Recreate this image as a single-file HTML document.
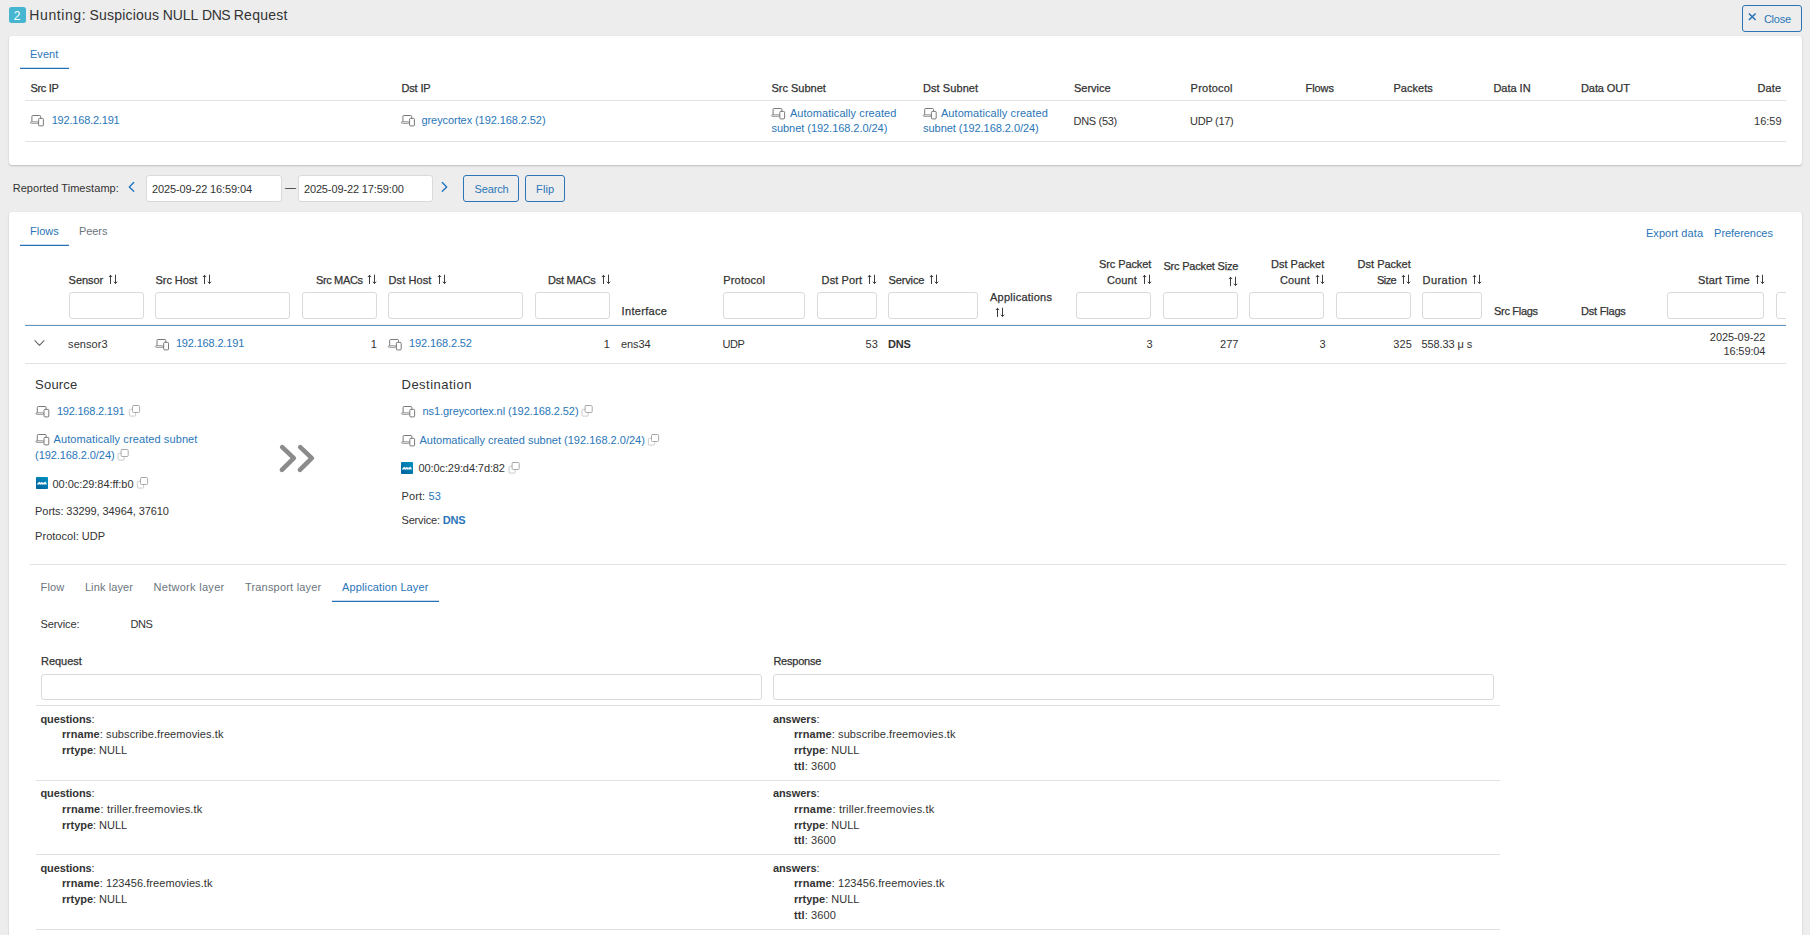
<!DOCTYPE html>
<html lang="en">
<head>
<meta charset="utf-8">
<title>Hunting: Suspicious NULL DNS Request</title>
<style>
html,body{margin:0;padding:0}
body{width:1810px;height:935px;overflow:hidden;position:relative;background:#ededed;
 font-family:"Liberation Sans",Arial,sans-serif;font-size:11px;color:#333}
h1{margin:0;font:inherit}
.t{position:absolute;white-space:nowrap;line-height:14px;font-size:11px;color:#333}
.t b{font-weight:700}
.w{display:inline-block}
.s12{font-size:12px}.s13{font-size:13px;line-height:16px}.s14{font-size:14px;line-height:16px}
.sb{-webkit-text-stroke:0.25px currentColor}
.bx,.ln,.in,.card,.ic,.clip{position:absolute}
.card{background:#fff;border-radius:3px;box-shadow:0 1px 2px rgba(0,0,0,.2),0 0 1px rgba(0,0,0,.07)}
.in{box-sizing:border-box;background:#fff;border:1px solid #dadada;border-radius:3px}
.clip{overflow:hidden}
.ic{overflow:visible}
</style>
</head>
<body>
<header id="titlebar">
<div class="bx" style="left:9px;top:7px;width:17px;height:16px;background:#46b6d0;border-radius:2.5px"></div>
<span class="t s12" style="left:13.70px;top:9.00px;color:#fff;letter-spacing:0.912px">2</span>
<h1>
<span class="t s14 ttl" style="left:29.35px;top:7.10px;word-spacing:-3.892px"><span class="w" style="width:60.15px;letter-spacing:0.587px">Hunting:</span> <span class="w" style="width:73.30px;letter-spacing:0.200px">Suspicious</span> <span class="w" style="width:39.30px;letter-spacing:-0.099px">NULL</span> <span class="w" style="width:31.70px;letter-spacing:-0.488px">DNS</span> <span class="w" style="width:54.90px;letter-spacing:0.249px">Request</span></span>
</h1>
<div class="bx" style="left:1742px;top:5px;width:60px;height:27px;border:1px solid #2b74b6;border-radius:3px;box-sizing:border-box"></div>
<svg class="ic" style="left:1747px;top:12px" width="12" height="12" viewBox="0 0 12 12" ><path d="M1.9 1.5L8.6 8.1M8.6 1.5L1.9 8.1" stroke="#2470b4" stroke-width="1.45" fill="none"/></svg>
<span class="t" style="left:1763.90px;top:12.00px;color:#2a76b8;letter-spacing:-0.225px">Close</span>
</header>
<section id="event-card">
<div class="card" style="left:9px;top:36px;width:1793px;height:129px;"></div>
<span class="t" style="left:29.90px;top:47.00px;color:#2a76b8;letter-spacing:0.092px">Event</span>
<div class="ln" style="left:20px;top:68px;width:49px;height:1px;background:#2470b4"></div>
<div class="ln" style="left:20px;top:67px;width:49px;height:1px;background:rgba(36,112,180,0.25)"></div>
<span class="t sb" style="left:30.40px;top:81.00px;letter-spacing:-0.292px">Src IP</span>
<span class="t sb" style="left:401.40px;top:81.00px;letter-spacing:-0.126px">Dst IP</span>
<span class="t sb" style="left:771.40px;top:81.00px">Src Subnet</span>
<span class="t sb" style="left:923.00px;top:81.00px;letter-spacing:0.078px">Dst Subnet</span>
<span class="t sb" style="left:1074.00px;top:81.00px;letter-spacing:-0.012px">Service</span>
<span class="t sb" style="left:1190.60px;top:81.00px;letter-spacing:0.230px">Protocol</span>
<span class="t sb" style="left:1305.60px;top:81.00px;letter-spacing:-0.107px">Flows</span>
<span class="t sb" style="left:1393.50px;top:81.00px;letter-spacing:0.023px">Packets</span>
<span class="t sb" style="left:1493.40px;top:81.00px;letter-spacing:-0.014px">Data IN</span>
<span class="t sb" style="left:1581.00px;top:81.00px;letter-spacing:-0.089px">Data OUT</span>
<span class="t sb" style="left:1757.40px;top:81.00px;letter-spacing:0.137px">Date</span>
<div class="ln" style="left:25px;top:100px;width:1761px;height:1px;background:#e2e2e2"></div>
<svg class="ic" style="left:29px;top:114px" width="16" height="14" viewBox="0 0 16 14" ><g transform="translate(0.9 0.9)"><g fill="none" stroke="#6a6a6a" stroke-width="0.9" stroke-linejoin="round"><path d="M2 6.8V1.6a1 1 0 0 1 1-1h6.8a1 1 0 0 1 1 1v1.5"/><rect x="0.6" y="6.85" width="7.6" height="1.6" rx="0.8" stroke-width="0.7"/><rect x="8.7" y="3.5" width="4.8" height="7.5" rx="0.9" fill="#fff"/></g></g></svg>
<a class="t" style="left:51.70px;top:113.00px;color:#2a76b8;letter-spacing:-0.197px">192.168.2.191</a>
<svg class="ic" style="left:400px;top:114px" width="16" height="14" viewBox="0 0 16 14" ><g transform="translate(0.9 0.9)"><g fill="none" stroke="#6a6a6a" stroke-width="0.9" stroke-linejoin="round"><path d="M2 6.8V1.6a1 1 0 0 1 1-1h6.8a1 1 0 0 1 1 1v1.5"/><rect x="0.6" y="6.85" width="7.6" height="1.6" rx="0.8" stroke-width="0.7"/><rect x="8.7" y="3.5" width="4.8" height="7.5" rx="0.9" fill="#fff"/></g></g></svg>
<a class="t" style="left:421.50px;top:113.00px;color:#2a76b8;letter-spacing:-0.079px">greycortex (192.168.2.52)</a>
<svg class="ic" style="left:771px;top:107px" width="16" height="14" viewBox="0 0 16 14" ><g transform="translate(0.1 0.9)"><g fill="none" stroke="#6a6a6a" stroke-width="0.9" stroke-linejoin="round"><path d="M2 6.8V1.6a1 1 0 0 1 1-1h6.8a1 1 0 0 1 1 1v1.5"/><rect x="0.6" y="6.85" width="7.6" height="1.6" rx="0.8" stroke-width="0.7"/><rect x="8.7" y="3.5" width="4.8" height="7.5" rx="0.9" fill="#fff"/></g></g></svg>
<a class="t" style="left:789.90px;top:106.40px;color:#2a76b8;letter-spacing:0.068px">Automatically created</a>
<a class="t" style="left:771.50px;top:121.00px;color:#2a76b8;letter-spacing:-0.044px">subnet (192.168.2.0/24)</a>
<svg class="ic" style="left:922px;top:107px" width="16" height="14" viewBox="0 0 16 14" ><g transform="translate(0.7 0.9)"><g fill="none" stroke="#6a6a6a" stroke-width="0.9" stroke-linejoin="round"><path d="M2 6.8V1.6a1 1 0 0 1 1-1h6.8a1 1 0 0 1 1 1v1.5"/><rect x="0.6" y="6.85" width="7.6" height="1.6" rx="0.8" stroke-width="0.7"/><rect x="8.7" y="3.5" width="4.8" height="7.5" rx="0.9" fill="#fff"/></g></g></svg>
<a class="t" style="left:940.90px;top:106.40px;color:#2a76b8;letter-spacing:0.087px">Automatically created</a>
<a class="t" style="left:923.10px;top:121.00px;color:#2a76b8;letter-spacing:-0.053px">subnet (192.168.2.0/24)</a>
<span class="t" style="left:1073.50px;top:114.00px;letter-spacing:-0.305px">DNS (53)</span>
<span class="t" style="left:1190.10px;top:114.00px;letter-spacing:-0.282px">UDP (17)</span>
<span class="t" style="left:1754.10px;top:114.00px;letter-spacing:-0.026px">16:59</span>
<div class="ln" style="left:25px;top:141px;width:1761px;height:1px;background:#e2e2e2"></div>
</section>
<section id="timebar">
<span class="t" style="left:12.70px;top:181.00px;letter-spacing:0.055px">Reported Timestamp:</span>
<svg class="ic" style="left:126px;top:180px" width="13" height="15" viewBox="0 0 13 15" ><path d="M7.7 2.5L3.3 6.9L7.7 11.3" stroke="#1f74bf" stroke-width="1.35" fill="none" stroke-linecap="round" stroke-linejoin="round"/></svg>
<div class="in" style="left:146px;top:175px;width:136px;height:27px;"></div>
<span class="t" style="left:152.10px;top:182.00px;letter-spacing:-0.124px">2025-09-22 16:59:04</span>
<span class="t" style="left:285.00px;top:180.00px;letter-spacing:-0.600px">—</span>
<div class="in" style="left:298px;top:175px;width:135px;height:27px;"></div>
<span class="t" style="left:303.90px;top:182.00px;letter-spacing:-0.124px">2025-09-22 17:59:00</span>
<svg class="ic" style="left:438px;top:180px" width="13" height="15" viewBox="0 0 13 15" ><path d="M4.3 2.5L8.7 6.9L4.3 11.3" stroke="#1f74bf" stroke-width="1.35" fill="none" stroke-linecap="round" stroke-linejoin="round"/></svg>
<div class="bx" style="left:463px;top:175px;width:56px;height:27px;border:1px solid #2b74b6;border-radius:3px;box-sizing:border-box"></div>
<span class="t" style="left:474.50px;top:182.00px;color:#2a76b8;letter-spacing:-0.143px">Search</span>
<div class="bx" style="left:525px;top:175px;width:40px;height:27px;border:1px solid #2b74b6;border-radius:3px;box-sizing:border-box"></div>
<span class="t" style="left:536.10px;top:182.00px;color:#2a76b8;letter-spacing:0.066px">Flip</span>
</section>
<section id="flows-card">
<div class="card" style="left:9px;top:212px;width:1793px;height:723px;border-radius:3px 3px 0 0"></div>
<span class="t" style="left:29.90px;top:224.00px;color:#2a76b8;letter-spacing:0.053px">Flows</span>
<div class="ln" style="left:20px;top:245px;width:49px;height:1px;background:#2470b4"></div>
<div class="ln" style="left:20px;top:244px;width:49px;height:1px;background:rgba(36,112,180,0.25)"></div>
<span class="t" style="left:78.90px;top:224.00px;color:#6c757d;letter-spacing:-0.030px">Peers</span>
<a class="t" style="left:1645.90px;top:226.00px;color:#2a76b8;letter-spacing:0.085px">Export data</a>
<a class="t" style="left:1714.10px;top:226.00px;color:#2a76b8;letter-spacing:-0.047px">Preferences</a>
<span class="t sb" style="left:68.60px;top:273.00px;letter-spacing:-0.043px">Sensor</span>
<svg class="ic" style="left:108px;top:274px" width="11" height="11" viewBox="0 0 11 11" ><g transform="translate(0.5 0.3)"><g fill="none" stroke="#3d3d3d" stroke-width="1" stroke-linecap="round" stroke-linejoin="round"><path d="M2 9.3V1M0.6 2.5L2 1L3.4 2.5"/><path d="M7 0.8V9.1M5.6 7.7L7 9.2L8.4 7.7"/></g></g></svg>
<span class="t sb" style="left:155.60px;top:273.00px;letter-spacing:-0.073px">Src Host</span>
<svg class="ic" style="left:202px;top:274px" width="11" height="11" viewBox="0 0 11 11" ><g transform="translate(0.5 0.3)"><g fill="none" stroke="#3d3d3d" stroke-width="1" stroke-linecap="round" stroke-linejoin="round"><path d="M2 9.3V1M0.6 2.5L2 1L3.4 2.5"/><path d="M7 0.8V9.1M5.6 7.7L7 9.2L8.4 7.7"/></g></g></svg>
<span class="t sb" style="left:316.00px;top:273.00px;letter-spacing:-0.363px">Src MACs</span>
<svg class="ic" style="left:367px;top:274px" width="11" height="11" viewBox="0 0 11 11" ><g transform="translate(0.5 0.3)"><g fill="none" stroke="#3d3d3d" stroke-width="1" stroke-linecap="round" stroke-linejoin="round"><path d="M2 9.3V1M0.6 2.5L2 1L3.4 2.5"/><path d="M7 0.8V9.1M5.6 7.7L7 9.2L8.4 7.7"/></g></g></svg>
<span class="t sb" style="left:388.60px;top:273.00px;letter-spacing:0.077px">Dst Host</span>
<svg class="ic" style="left:437px;top:274px" width="11" height="11" viewBox="0 0 11 11" ><g transform="translate(0.5 0.3)"><g fill="none" stroke="#3d3d3d" stroke-width="1" stroke-linecap="round" stroke-linejoin="round"><path d="M2 9.3V1M0.6 2.5L2 1L3.4 2.5"/><path d="M7 0.8V9.1M5.6 7.7L7 9.2L8.4 7.7"/></g></g></svg>
<span class="t sb" style="left:548.00px;top:273.00px;letter-spacing:-0.238px">Dst MACs</span>
<svg class="ic" style="left:601px;top:274px" width="11" height="11" viewBox="0 0 11 11" ><g transform="translate(0.5 0.3)"><g fill="none" stroke="#3d3d3d" stroke-width="1" stroke-linecap="round" stroke-linejoin="round"><path d="M2 9.3V1M0.6 2.5L2 1L3.4 2.5"/><path d="M7 0.8V9.1M5.6 7.7L7 9.2L8.4 7.7"/></g></g></svg>
<span class="t sb" style="left:621.60px;top:303.60px;letter-spacing:0.310px">Interface</span>
<span class="t sb" style="left:723.20px;top:273.00px;letter-spacing:0.205px">Protocol</span>
<span class="t sb" style="left:821.60px;top:273.00px;letter-spacing:0.108px">Dst Port</span>
<svg class="ic" style="left:867px;top:274px" width="11" height="11" viewBox="0 0 11 11" ><g transform="translate(0.5 0.3)"><g fill="none" stroke="#3d3d3d" stroke-width="1" stroke-linecap="round" stroke-linejoin="round"><path d="M2 9.3V1M0.6 2.5L2 1L3.4 2.5"/><path d="M7 0.8V9.1M5.6 7.7L7 9.2L8.4 7.7"/></g></g></svg>
<span class="t sb" style="left:888.60px;top:273.00px;letter-spacing:-0.155px">Service</span>
<svg class="ic" style="left:929px;top:274px" width="11" height="11" viewBox="0 0 11 11" ><g transform="translate(0.5 0.3)"><g fill="none" stroke="#3d3d3d" stroke-width="1" stroke-linecap="round" stroke-linejoin="round"><path d="M2 9.3V1M0.6 2.5L2 1L3.4 2.5"/><path d="M7 0.8V9.1M5.6 7.7L7 9.2L8.4 7.7"/></g></g></svg>
<span class="t sb" style="left:1099.00px;top:257.00px;letter-spacing:-0.099px">Src Packet</span>
<span class="t sb" style="left:1107.00px;top:273.00px;letter-spacing:0.088px">Count</span>
<svg class="ic" style="left:1142px;top:274px" width="11" height="11" viewBox="0 0 11 11" ><g transform="translate(0.5 0.3)"><g fill="none" stroke="#3d3d3d" stroke-width="1" stroke-linecap="round" stroke-linejoin="round"><path d="M2 9.3V1M0.6 2.5L2 1L3.4 2.5"/><path d="M7 0.8V9.1M5.6 7.7L7 9.2L8.4 7.7"/></g></g></svg>
<span class="t sb" style="left:1163.40px;top:259.00px;letter-spacing:-0.189px">Src Packet Size</span>
<span class="t sb" style="left:1271.00px;top:257.00px">Dst Packet</span>
<span class="t sb" style="left:1280.00px;top:273.00px;letter-spacing:0.088px">Count</span>
<svg class="ic" style="left:1315px;top:274px" width="11" height="11" viewBox="0 0 11 11" ><g transform="translate(0.5 0.3)"><g fill="none" stroke="#3d3d3d" stroke-width="1" stroke-linecap="round" stroke-linejoin="round"><path d="M2 9.3V1M0.6 2.5L2 1L3.4 2.5"/><path d="M7 0.8V9.1M5.6 7.7L7 9.2L8.4 7.7"/></g></g></svg>
<span class="t sb" style="left:1357.60px;top:257.00px">Dst Packet</span>
<span class="t sb" style="left:1377.00px;top:273.00px;letter-spacing:-0.552px">Size</span>
<svg class="ic" style="left:1401px;top:274px" width="11" height="11" viewBox="0 0 11 11" ><g transform="translate(0.5 0.3)"><g fill="none" stroke="#3d3d3d" stroke-width="1" stroke-linecap="round" stroke-linejoin="round"><path d="M2 9.3V1M0.6 2.5L2 1L3.4 2.5"/><path d="M7 0.8V9.1M5.6 7.7L7 9.2L8.4 7.7"/></g></g></svg>
<span class="t sb" style="left:1422.60px;top:273.00px;letter-spacing:0.428px">Duration</span>
<svg class="ic" style="left:1472px;top:274px" width="11" height="11" viewBox="0 0 11 11" ><g transform="translate(0.5 0.3)"><g fill="none" stroke="#3d3d3d" stroke-width="1" stroke-linecap="round" stroke-linejoin="round"><path d="M2 9.3V1M0.6 2.5L2 1L3.4 2.5"/><path d="M7 0.8V9.1M5.6 7.7L7 9.2L8.4 7.7"/></g></g></svg>
<span class="t sb" style="left:1494.00px;top:303.60px;letter-spacing:-0.297px">Src Flags</span>
<span class="t sb" style="left:1581.00px;top:303.60px;letter-spacing:-0.208px">Dst Flags</span>
<span class="t sb" style="left:1698.00px;top:273.00px;letter-spacing:0.167px">Start Time</span>
<svg class="ic" style="left:1755px;top:274px" width="11" height="11" viewBox="0 0 11 11" ><g transform="translate(0.5 0.3)"><g fill="none" stroke="#3d3d3d" stroke-width="1" stroke-linecap="round" stroke-linejoin="round"><path d="M2 9.3V1M0.6 2.5L2 1L3.4 2.5"/><path d="M7 0.8V9.1M5.6 7.7L7 9.2L8.4 7.7"/></g></g></svg>
<span class="t sb" style="left:990.00px;top:290.00px;letter-spacing:0.239px">Applications</span>
<svg class="ic" style="left:995px;top:307px" width="11" height="11" viewBox="0 0 11 11" ><g transform="translate(0.5 0.3)"><g fill="none" stroke="#3d3d3d" stroke-width="1" stroke-linecap="round" stroke-linejoin="round"><path d="M2 9.3V1M0.6 2.5L2 1L3.4 2.5"/><path d="M7 0.8V9.1M5.6 7.7L7 9.2L8.4 7.7"/></g></g></svg>
<svg class="ic" style="left:1228px;top:276px" width="11" height="11" viewBox="0 0 11 11" ><g transform="translate(0.5 0.3)"><g fill="none" stroke="#3d3d3d" stroke-width="1" stroke-linecap="round" stroke-linejoin="round"><path d="M2 9.3V1M0.6 2.5L2 1L3.4 2.5"/><path d="M7 0.8V9.1M5.6 7.7L7 9.2L8.4 7.7"/></g></g></svg>
<div class="in" style="left:69px;top:292px;width:75px;height:27px;"></div>
<div class="in" style="left:155px;top:292px;width:135px;height:27px;"></div>
<div class="in" style="left:302px;top:292px;width:75px;height:27px;"></div>
<div class="in" style="left:388px;top:292px;width:135px;height:27px;"></div>
<div class="in" style="left:535px;top:292px;width:75px;height:27px;"></div>
<div class="in" style="left:723px;top:292px;width:82px;height:27px;"></div>
<div class="in" style="left:817px;top:292px;width:60px;height:27px;"></div>
<div class="in" style="left:888px;top:292px;width:90px;height:27px;"></div>
<div class="in" style="left:1076px;top:292px;width:75px;height:27px;"></div>
<div class="in" style="left:1163px;top:292px;width:75px;height:27px;"></div>
<div class="in" style="left:1249px;top:292px;width:75px;height:27px;"></div>
<div class="in" style="left:1336px;top:292px;width:75px;height:27px;"></div>
<div class="in" style="left:1422px;top:292px;width:60px;height:27px;"></div>
<div class="in" style="left:1667px;top:292px;width:97px;height:27px;"></div>
<div class="clip" style="left:1776px;top:292px;width:10px;height:27px"><div class="in" style="left:0;top:0;width:60px;height:27px"></div></div>
<div class="ln" style="left:25px;top:325px;width:1761px;height:1px;background:#5b97c9"></div>
<div class="ln" style="left:25px;top:324px;width:1761px;height:1px;background:#f3f0ee"></div>
<svg class="ic" style="left:33px;top:338px" width="14" height="11" viewBox="0 0 14 11" ><path d="M1.9 2.7L6.45 7.3L11 2.7" stroke="#5f5f5f" stroke-width="1.05" fill="none" stroke-linecap="round" stroke-linejoin="round"/></svg>
<span class="t" style="left:68.10px;top:337.00px;letter-spacing:0.066px">sensor3</span>
<svg class="ic" style="left:155px;top:338px" width="16" height="14" viewBox="0 0 16 14" ><g transform="translate(0.0 0.9)"><g fill="none" stroke="#6a6a6a" stroke-width="0.9" stroke-linejoin="round"><path d="M2 6.8V1.6a1 1 0 0 1 1-1h6.8a1 1 0 0 1 1 1v1.5"/><rect x="0.6" y="6.85" width="7.6" height="1.6" rx="0.8" stroke-width="0.7"/><rect x="8.7" y="3.5" width="4.8" height="7.5" rx="0.9" fill="#fff"/></g></g></svg>
<a class="t" style="left:175.90px;top:336.00px;color:#2a76b8;letter-spacing:-0.166px">192.168.2.191</a>
<span class="t" style="left:370.77px;top:337.00px;letter-spacing:-0.600px">1</span>
<svg class="ic" style="left:387px;top:338px" width="16" height="14" viewBox="0 0 16 14" ><g transform="translate(0.7 0.9)"><g fill="none" stroke="#6a6a6a" stroke-width="0.9" stroke-linejoin="round"><path d="M2 6.8V1.6a1 1 0 0 1 1-1h6.8a1 1 0 0 1 1 1v1.5"/><rect x="0.6" y="6.85" width="7.6" height="1.6" rx="0.8" stroke-width="0.7"/><rect x="8.7" y="3.5" width="4.8" height="7.5" rx="0.9" fill="#fff"/></g></g></svg>
<a class="t" style="left:408.90px;top:336.00px;color:#2a76b8;letter-spacing:-0.103px">192.168.2.52</a>
<span class="t" style="left:603.77px;top:337.00px;letter-spacing:-0.600px">1</span>
<span class="t" style="left:620.90px;top:337.00px;letter-spacing:-0.077px">ens34</span>
<span class="t" style="left:722.50px;top:337.00px;letter-spacing:-0.411px">UDP</span>
<span class="t" style="left:865.38px;top:337.00px;letter-spacing:0.275px">53</span>
<span class="t" style="left:888.10px;top:337.00px;letter-spacing:-0.278px"><b>DNS</b></span>
<span class="t" style="left:1146.38px;top:337.00px;letter-spacing:0.875px">3</span>
<span class="t" style="left:1220.11px;top:337.00px;letter-spacing:0.014px">277</span>
<span class="t" style="left:1319.38px;top:337.00px;letter-spacing:0.875px">3</span>
<span class="t" style="left:1393.25px;top:337.00px;letter-spacing:0.147px">325</span>
<span class="t" style="left:1421.50px;top:337.00px;letter-spacing:-0.101px">558.33 μ s</span>
<span class="t" style="left:1709.83px;top:330.00px;letter-spacing:-0.068px">2025-09-22</span>
<span class="t" style="left:1723.40px;top:343.60px;letter-spacing:-0.104px">16:59:04</span>
<div class="ln" style="left:25px;top:363px;width:1761px;height:1px;background:#e2e2e2"></div>
<div id="detail">
<span class="t s13 h" style="left:35.10px;top:377.00px;letter-spacing:0.199px">Source</span>
<svg class="ic" style="left:35px;top:405px" width="16" height="14" viewBox="0 0 16 14" ><g transform="translate(0.3 0.9)"><g fill="none" stroke="#6a6a6a" stroke-width="0.9" stroke-linejoin="round"><path d="M2 6.8V1.6a1 1 0 0 1 1-1h6.8a1 1 0 0 1 1 1v1.5"/><rect x="0.6" y="6.85" width="7.6" height="1.6" rx="0.8" stroke-width="0.7"/><rect x="8.7" y="3.5" width="4.8" height="7.5" rx="0.9" fill="#fff"/></g></g></svg>
<a class="t" style="left:56.90px;top:404.00px;color:#2a76b8;letter-spacing:-0.212px">192.168.2.191</a>
<svg class="ic" style="left:129px;top:405px" width="13" height="13" viewBox="0 0 13 13" ><g fill="none" stroke-linejoin="round" stroke-linecap="round"><path d="M3.2 4.3H1.3a0.9 0.9 0 0 0-0.9 0.9v5a0.9 0.9 0 0 0 0.9 0.9h4.4a0.9 0.9 0 0 0 0.9-0.9V8.4" stroke="#c6c6c6" stroke-width="0.9"/><rect x="3.5" y="0.5" width="7.1" height="7" rx="1" stroke="#a0a0a0" stroke-width="0.9"/></g></svg>
<svg class="ic" style="left:35px;top:433px" width="16" height="14" viewBox="0 0 16 14" ><g transform="translate(0.3 0.9)"><g fill="none" stroke="#6a6a6a" stroke-width="0.9" stroke-linejoin="round"><path d="M2 6.8V1.6a1 1 0 0 1 1-1h6.8a1 1 0 0 1 1 1v1.5"/><rect x="0.6" y="6.85" width="7.6" height="1.6" rx="0.8" stroke-width="0.7"/><rect x="8.7" y="3.5" width="4.8" height="7.5" rx="0.9" fill="#fff"/></g></g></svg>
<a class="t" style="left:53.50px;top:432.00px;color:#2a76b8;letter-spacing:0.098px">Automatically created subnet</a>
<a class="t" style="left:35.10px;top:448.00px;color:#2a76b8;letter-spacing:-0.083px">(192.168.2.0/24)</a>
<svg class="ic" style="left:117px;top:449px" width="13" height="13" viewBox="0 0 13 13" ><g transform="translate(0.6 0)"><g fill="none" stroke-linejoin="round" stroke-linecap="round"><path d="M3.2 4.3H1.3a0.9 0.9 0 0 0-0.9 0.9v5a0.9 0.9 0 0 0 0.9 0.9h4.4a0.9 0.9 0 0 0 0.9-0.9V8.4" stroke="#c6c6c6" stroke-width="0.9"/><rect x="3.5" y="0.5" width="7.1" height="7" rx="1" stroke="#a0a0a0" stroke-width="0.9"/></g></g></svg>
<svg class="ic" style="left:36px;top:477px" width="13" height="13" viewBox="0 0 13 13" ><defs><linearGradient id="g1" x1="1" y1="0" x2="0.2" y2="1"><stop offset="0" stop-color="#0093c4"/><stop offset="1" stop-color="#00649c"/></linearGradient></defs><rect x="0" y="0" width="12" height="12" rx="0.8" fill="url(#g1)"/><path d="M1.1 6.9L2.2 5.6L3.3 4.7L4 5.3L4.6 5.8L5.3 5.3L5.9 5.1L6.8 5.5L7.6 5.8L8.7 5.1L9.7 4.7L10.3 5.8L10.7 7.1L10.5 7.7L9.6 7.2L8.8 7.7L7.8 7.3L6.8 7.7L5.6 7.3L4.4 7.7L3.2 7.3L2 7.7L1.1 7.5Z" fill="#fff" opacity="0.93"/></svg>
<span class="t" style="left:52.50px;top:477.00px;letter-spacing:-0.045px">00:0c:29:84:ff:b0</span>
<svg class="ic" style="left:137px;top:477px" width="13" height="13" viewBox="0 0 13 13" ><g fill="none" stroke-linejoin="round" stroke-linecap="round"><path d="M3.2 4.3H1.3a0.9 0.9 0 0 0-0.9 0.9v5a0.9 0.9 0 0 0 0.9 0.9h4.4a0.9 0.9 0 0 0 0.9-0.9V8.4" stroke="#c6c6c6" stroke-width="0.9"/><rect x="3.5" y="0.5" width="7.1" height="7" rx="1" stroke="#a0a0a0" stroke-width="0.9"/></g></svg>
<span class="t" style="left:35.10px;top:504.00px;letter-spacing:-0.076px">Ports: 33299, 34964, 37610</span>
<span class="t" style="left:35.10px;top:529.00px;letter-spacing:0.023px">Protocol: UDP</span>
<svg class="ic" style="left:276px;top:441px" width="45" height="36" viewBox="0 0 45 36" ><g fill="none" stroke="#8b8b8b" stroke-width="4.6" stroke-linecap="round" stroke-linejoin="round"><path d="M6.2 6.1L17.8 17.2L5.9 28.9"/><path d="M24.2 6.1L35.8 17.2L23.9 28.9"/></g></svg>
<span class="t s13 h" style="left:401.50px;top:377.00px;letter-spacing:0.487px">Destination</span>
<svg class="ic" style="left:401px;top:405px" width="16" height="14" viewBox="0 0 16 14" ><g transform="translate(0.1 0.9)"><g fill="none" stroke="#6a6a6a" stroke-width="0.9" stroke-linejoin="round"><path d="M2 6.8V1.6a1 1 0 0 1 1-1h6.8a1 1 0 0 1 1 1v1.5"/><rect x="0.6" y="6.85" width="7.6" height="1.6" rx="0.8" stroke-width="0.7"/><rect x="8.7" y="3.5" width="4.8" height="7.5" rx="0.9" fill="#fff"/></g></g></svg>
<a class="t" style="left:422.50px;top:404.00px;color:#2a76b8;letter-spacing:-0.074px">ns1.greycortex.nl (192.168.2.52)</a>
<svg class="ic" style="left:581px;top:405px" width="13" height="13" viewBox="0 0 13 13" ><g transform="translate(0.6 0)"><g fill="none" stroke-linejoin="round" stroke-linecap="round"><path d="M3.2 4.3H1.3a0.9 0.9 0 0 0-0.9 0.9v5a0.9 0.9 0 0 0 0.9 0.9h4.4a0.9 0.9 0 0 0 0.9-0.9V8.4" stroke="#c6c6c6" stroke-width="0.9"/><rect x="3.5" y="0.5" width="7.1" height="7" rx="1" stroke="#a0a0a0" stroke-width="0.9"/></g></g></svg>
<svg class="ic" style="left:401px;top:434px" width="16" height="14" viewBox="0 0 16 14" ><g transform="translate(0.1 0.9)"><g fill="none" stroke="#6a6a6a" stroke-width="0.9" stroke-linejoin="round"><path d="M2 6.8V1.6a1 1 0 0 1 1-1h6.8a1 1 0 0 1 1 1v1.5"/><rect x="0.6" y="6.85" width="7.6" height="1.6" rx="0.8" stroke-width="0.7"/><rect x="8.7" y="3.5" width="4.8" height="7.5" rx="0.9" fill="#fff"/></g></g></svg>
<a class="t" style="left:419.50px;top:433.00px;color:#2a76b8;letter-spacing:0.008px">Automatically created subnet (192.168.2.0/24)</a>
<svg class="ic" style="left:648px;top:434px" width="13" height="13" viewBox="0 0 13 13" ><g fill="none" stroke-linejoin="round" stroke-linecap="round"><path d="M3.2 4.3H1.3a0.9 0.9 0 0 0-0.9 0.9v5a0.9 0.9 0 0 0 0.9 0.9h4.4a0.9 0.9 0 0 0 0.9-0.9V8.4" stroke="#c6c6c6" stroke-width="0.9"/><rect x="3.5" y="0.5" width="7.1" height="7" rx="1" stroke="#a0a0a0" stroke-width="0.9"/></g></svg>
<svg class="ic" style="left:401px;top:462px" width="13" height="13" viewBox="0 0 13 13" ><defs><linearGradient id="g2" x1="1" y1="0" x2="0.2" y2="1"><stop offset="0" stop-color="#0093c4"/><stop offset="1" stop-color="#00649c"/></linearGradient></defs><rect x="0" y="0" width="12" height="12" rx="0.8" fill="url(#g2)"/><path d="M1.1 6.9L2.2 5.6L3.3 4.7L4 5.3L4.6 5.8L5.3 5.3L5.9 5.1L6.8 5.5L7.6 5.8L8.7 5.1L9.7 4.7L10.3 5.8L10.7 7.1L10.5 7.7L9.6 7.2L8.8 7.7L7.8 7.3L6.8 7.7L5.6 7.3L4.4 7.7L3.2 7.3L2 7.7L1.1 7.5Z" fill="#fff" opacity="0.93"/></svg>
<span class="t" style="left:418.50px;top:461.00px;letter-spacing:-0.099px">00:0c:29:d4:7d:82</span>
<svg class="ic" style="left:508px;top:462px" width="13" height="13" viewBox="0 0 13 13" ><g transform="translate(0.6 0)"><g fill="none" stroke-linejoin="round" stroke-linecap="round"><path d="M3.2 4.3H1.3a0.9 0.9 0 0 0-0.9 0.9v5a0.9 0.9 0 0 0 0.9 0.9h4.4a0.9 0.9 0 0 0 0.9-0.9V8.4" stroke="#c6c6c6" stroke-width="0.9"/><rect x="3.5" y="0.5" width="7.1" height="7" rx="1" stroke="#a0a0a0" stroke-width="0.9"/></g></g></svg>
<span class="t" style="left:401.50px;top:489.00px;letter-spacing:0.107px">Port: <span style="color:#2a76b8">53</span></span>
<span class="t" style="left:401.50px;top:513.00px;letter-spacing:-0.169px">Service: <b style="color:#2a76b8">DNS</b></span>
<div class="ln" style="left:30px;top:564px;width:1756px;height:1px;background:#e2e2e2"></div>
<span class="t" style="left:40.50px;top:580.00px;color:#6c757d;letter-spacing:0.191px">Flow</span>
<span class="t" style="left:84.90px;top:580.00px;color:#6c757d;letter-spacing:0.112px">Link layer</span>
<span class="t" style="left:153.50px;top:580.00px;color:#6c757d;letter-spacing:0.288px">Network layer</span>
<span class="t" style="left:244.90px;top:580.00px;color:#6c757d;letter-spacing:0.202px">Transport layer</span>
<span class="t" style="left:342.10px;top:580.00px;color:#2a76b8;letter-spacing:0.118px">Application Layer</span>
<div class="ln" style="left:332px;top:601px;width:107px;height:1px;background:#2470b4"></div>
<div class="ln" style="left:332px;top:600px;width:107px;height:1px;background:rgba(36,112,180,0.25)"></div>
<span class="t" style="left:40.50px;top:617.00px;letter-spacing:-0.094px">Service:</span>
<span class="t" style="left:130.50px;top:617.00px;letter-spacing:-0.411px">DNS</span>
<span class="t sb" style="left:41.00px;top:654.00px;letter-spacing:-0.026px">Request</span>
<span class="t sb" style="left:773.40px;top:654.00px;letter-spacing:-0.218px">Response</span>
<div class="in" style="left:41px;top:674px;width:721px;height:26px;"></div>
<div class="in" style="left:773px;top:674px;width:721px;height:26px;"></div>
<div class="ln" style="left:36px;top:705px;width:1464px;height:1px;background:#e2e2e2"></div>
<span class="t" style="left:40.50px;top:712.00px;letter-spacing:-0.102px"><b>questions</b>:</span>
<span class="t" style="left:62.00px;top:727.00px;letter-spacing:0.082px"><b>rrname</b>: subscribe.freemovies.tk</span>
<span class="t" style="left:62.00px;top:743.00px;letter-spacing:-0.028px"><b>rrtype</b>: NULL</span>
<span class="t" style="left:772.90px;top:712.00px;letter-spacing:-0.062px"><b>answers</b>:</span>
<span class="t" style="left:794.00px;top:727.00px;letter-spacing:0.082px"><b>rrname</b>: subscribe.freemovies.tk</span>
<span class="t" style="left:794.00px;top:743.00px;letter-spacing:0.005px"><b>rrtype</b>: NULL</span>
<span class="t" style="left:794.00px;top:759.00px;letter-spacing:0.102px"><b>ttl</b>: 3600</span>
<div class="ln" style="left:36px;top:780px;width:1464px;height:1px;background:#e2e2e2"></div>
<span class="t" style="left:40.50px;top:786.00px;letter-spacing:-0.102px"><b>questions</b>:</span>
<span class="t" style="left:62.00px;top:802.00px;letter-spacing:0.186px"><b>rrname</b>: triller.freemovies.tk</span>
<span class="t" style="left:62.00px;top:818.00px;letter-spacing:-0.028px"><b>rrtype</b>: NULL</span>
<span class="t" style="left:772.90px;top:786.00px;letter-spacing:-0.062px"><b>answers</b>:</span>
<span class="t" style="left:794.00px;top:802.00px;letter-spacing:0.186px"><b>rrname</b>: triller.freemovies.tk</span>
<span class="t" style="left:794.00px;top:818.00px;letter-spacing:0.005px"><b>rrtype</b>: NULL</span>
<span class="t" style="left:794.00px;top:833.00px;letter-spacing:0.102px"><b>ttl</b>: 3600</span>
<div class="ln" style="left:36px;top:854px;width:1464px;height:1px;background:#e2e2e2"></div>
<span class="t" style="left:40.50px;top:861.00px;letter-spacing:-0.102px"><b>questions</b>:</span>
<span class="t" style="left:62.00px;top:876.00px;letter-spacing:0.068px"><b>rrname</b>: 123456.freemovies.tk</span>
<span class="t" style="left:62.00px;top:892.00px;letter-spacing:-0.028px"><b>rrtype</b>: NULL</span>
<span class="t" style="left:772.90px;top:861.00px;letter-spacing:-0.062px"><b>answers</b>:</span>
<span class="t" style="left:794.00px;top:876.00px;letter-spacing:0.068px"><b>rrname</b>: 123456.freemovies.tk</span>
<span class="t" style="left:794.00px;top:892.00px;letter-spacing:0.005px"><b>rrtype</b>: NULL</span>
<span class="t" style="left:794.00px;top:908.00px;letter-spacing:0.102px"><b>ttl</b>: 3600</span>
<div class="ln" style="left:36px;top:929px;width:1464px;height:1px;background:#e2e2e2"></div>
</div>
</section>
</body>
</html>
